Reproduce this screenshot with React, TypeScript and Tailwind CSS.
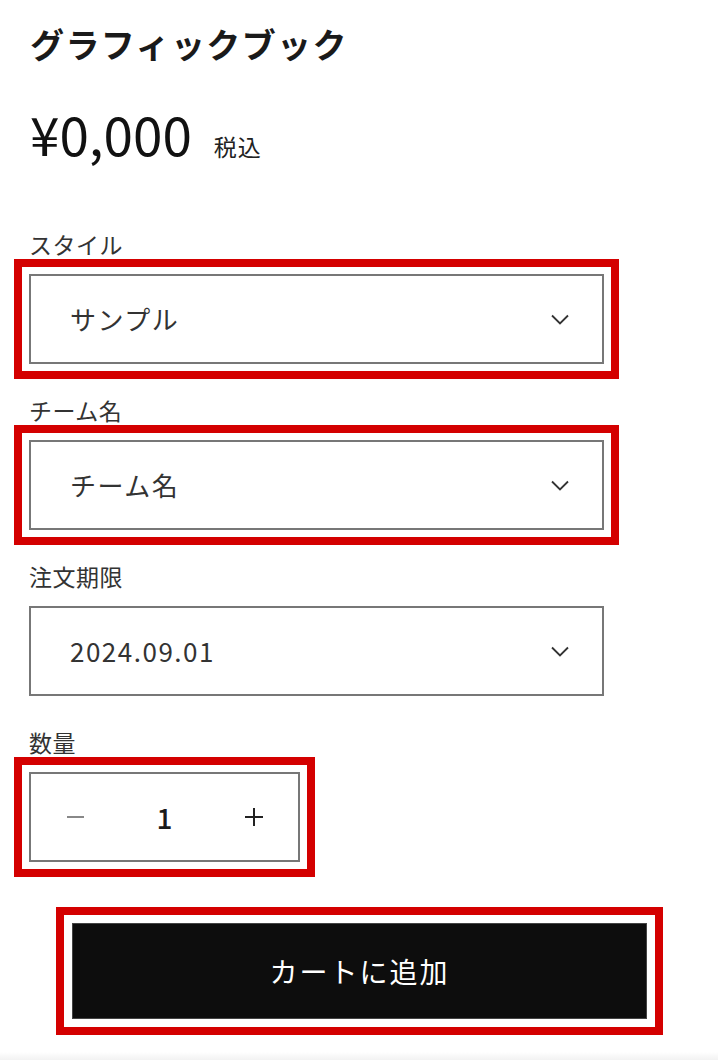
const Chevron = () => (
  <svg width="18" height="11" viewBox="0 0 18 11" fill="none" className="shrink-0">
    <path d="M1 1.5l8 8 8-8" stroke="#333" strokeWidth="1.8" />
  </svg>
);

// red annotation frame drawn over a control
const Frame = ({ inset = 'inset' }: { inset?: 'inset' | 'btn' }) => (
  <span
    className={`pointer-events-none absolute border-8 border-[#d40000] ${
      inset === 'btn' ? '-inset-[16px]' : '-inset-[15px]'
    }`}
  />
);

interface SelectProps {
  label: string;
  value: string;
  marked?: boolean;
}

const SelectField = ({ label, value, marked }: SelectProps) => (
  <div className="mb-[30px]">
    <div className="text-[23px] leading-[32px] tracking-[0.5px] text-[#333]">{label}</div>
    <div className="relative mt-[14px] w-[575px]">
      <div className="flex h-[90px] items-center justify-between border-2 border-[#777] pl-[39px] pr-[33px]">
        <span className="text-[26px] leading-none tracking-[1.5px] text-[#333]">{value}</span>
        <Chevron />
      </div>
      {marked && <Frame />}
    </div>
  </div>
);

export default function App() {
  return (
    <div className="flex min-h-[1060px] w-full flex-col bg-white font-['Noto_Sans_CJK_JP','Noto_Sans',sans-serif]">
      <div className="px-[29px] pt-[20px]">
        <h1 className="pl-[1px] text-[34px] font-bold leading-[48px] tracking-[1.4px] text-[#1a1a1a]">
          グラフィックブック
        </h1>

        <div className="mt-[33px] flex items-baseline pl-[1px]">
          <span className="text-[53px] leading-[64px] text-[#111]">¥0,000</span>
          <span className="ml-[22px] text-[23px] tracking-[1px] text-[#222]">税込</span>
        </div>

        <div className="mt-[63px]">
          <SelectField label="スタイル" value="サンプル" marked />
          <SelectField label="チーム名" value="チーム名" marked />
          <SelectField label="注文期限" value="2024.09.01" />

          <div>
            <div className="text-[23px] leading-[32px] tracking-[0.5px] text-[#333]">数量</div>
            <div className="relative mt-[14px] w-[271px]">
              <div className="grid h-[90px] grid-cols-3 items-center border-2 border-[#777]">
                <span className="flex justify-center">
                  <span className="block h-[2px] w-[17px] bg-[#888]" />
                </span>
                <span className="text-center text-[28px] font-medium leading-none text-[#1a1a1a]">1</span>
                <span className="relative mx-auto h-[18px] w-[18px]">
                  <span className="absolute left-0 top-[8px] h-[2px] w-[18px] bg-[#222]" />
                  <span className="absolute left-[8px] top-0 h-[18px] w-[2px] bg-[#222]" />
                </span>
              </div>
              <Frame />
            </div>
          </div>
        </div>

        <div className="relative ml-[43px] mt-[61px] w-[575px]">
          <button className="flex h-[96px] w-full items-center justify-center border border-[#444] bg-[#0d0d0d] text-[28px] tracking-[2px] text-white">
            カートに追加
          </button>
          <Frame inset="btn" />
        </div>
      </div>

      <div className="mt-auto h-[8px] bg-gradient-to-b from-white to-[#f2f2f2]" />
    </div>
  );
}
